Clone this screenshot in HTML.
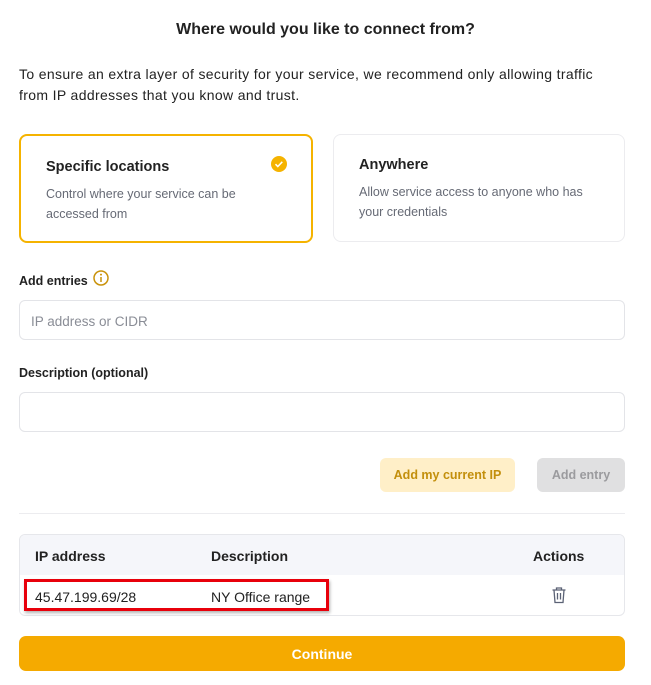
<!DOCTYPE html>
<html><head><style>
*{box-sizing:border-box;margin:0;padding:0}
body{width:651px;height:685px;background:#fff;font-family:"Liberation Sans",sans-serif;color:#1f1f24;position:relative;overflow:hidden}
.a{position:absolute}
.card{position:absolute;border-radius:8px;background:#fff}
.t{font-size:14.5px;font-weight:600;color:#222}
.d{font-size:12.5px;color:#666a75;line-height:20px}
.lab{font-size:12.5px;font-weight:700;color:#222}
.inp{position:absolute;left:19px;width:606px;height:40px;border:1px solid #e3e4e8;border-radius:6px;background:#fff}
</style></head><body>
<div class="a" style="left:0;width:651px;top:21px;text-align:center;font-size:16px;font-weight:700;color:#222">Where would you like to connect from?</div>
<div class="a" style="left:19px;top:64px;font-size:14px;line-height:21px;color:#222;width:600px;letter-spacing:0.35px">To ensure an extra layer of security for your service, we recommend only allowing traffic from IP addresses that you know and trust.</div>

<div class="card" style="left:19px;top:134px;width:294px;height:109px;border:2px solid #f5b300">
 <div class="a t" style="left:25px;top:23px">Specific locations</div>
 <div class="a d" style="left:25px;top:48px;width:220px">Control where your service can be accessed from</div>
 <svg class="a" style="left:249px;top:19px" width="18" height="18" viewBox="0 0 18 18"><circle cx="9" cy="9" r="8" fill="#f5b300"/><path d="M5.5 9.2l2.3 2.3 4.5-4.7" stroke="#fff" stroke-width="1.5" fill="none"/></svg>
</div>
<div class="card" style="left:333px;top:134px;width:292px;height:108px;border:1px solid #ececef">
 <div class="a t" style="left:25px;top:22px">Anywhere</div>
 <div class="a d" style="left:25px;top:47px;width:250px">Allow service access to anyone who has your credentials</div>
</div>

<div class="a lab" style="left:19px;top:274px">Add entries</div>
<svg class="a" style="left:92px;top:269px" width="18" height="18" viewBox="0 0 18 18"><circle cx="9" cy="9" r="7" stroke="#c9920a" stroke-width="1.5" fill="none"/><circle cx="9" cy="5.6" r="1" fill="#c9920a"/><path d="M9 8v5" stroke="#c9920a" stroke-width="1.5"/></svg>
<div class="inp" style="top:300px"><span class="a" style="left:11px;top:13px;font-size:13.5px;color:#8a8d96">IP address or CIDR</span></div>
<div class="a lab" style="left:19px;top:366px">Description (optional)</div>
<div class="inp" style="top:392px"></div>

<div class="a" style="left:380px;top:458px;width:135px;height:34px;border-radius:6px;background:#ffefc8;color:#c38f0c;font-size:12.5px;font-weight:700;text-align:center;line-height:35px">Add my current IP</div>
<div class="a" style="left:537px;top:458px;width:88px;height:34px;border-radius:6px;background:#e0e0e1;color:#9b9b9e;font-size:12.5px;font-weight:700;text-align:center;line-height:35px">Add entry</div>
<div class="a" style="left:19px;top:513px;width:606px;height:1px;background:#ececef"></div>

<div class="a" style="left:19px;top:534px;width:606px;height:82px;border:1px solid #e6e7eb;border-radius:6px;overflow:hidden">
 <div style="height:40px;background:#f5f6fa"></div>
</div>
<div class="a" style="left:35px;top:548px;font-size:14px;font-weight:600;color:#222">IP address</div>
<div class="a" style="left:211px;top:548px;font-size:14px;font-weight:600;color:#222">Description</div>
<div class="a" style="left:533px;top:548px;font-size:14px;font-weight:600;color:#222">Actions</div>
<div class="a" style="left:35px;top:589px;font-size:14px;color:#222">45.47.199.69/28</div>
<div class="a" style="left:211px;top:589px;font-size:14px;color:#222">NY Office range</div>
<div class="a" style="left:24px;top:579px;width:305px;height:32px;border:3px solid #e8000b;box-shadow:1px 2px 3px rgba(0,0,0,.3)"></div>
<svg class="a" style="left:551px;top:586px" width="16" height="18" viewBox="0 0 16 18"><path d="M1.5 4h13M5.5 4V2h5v2M3 4l1 12.5h8L13 4M6.5 7v6.5M9.5 7v6.5" stroke="#5b6275" stroke-width="1.3" fill="none"/></svg>

<div class="a" style="left:19px;top:636px;width:606px;height:35px;border-radius:7px;background:#f5aa00;color:#fff;font-size:14px;font-weight:700;text-align:center;line-height:37px">Continue</div>
</body></html>
